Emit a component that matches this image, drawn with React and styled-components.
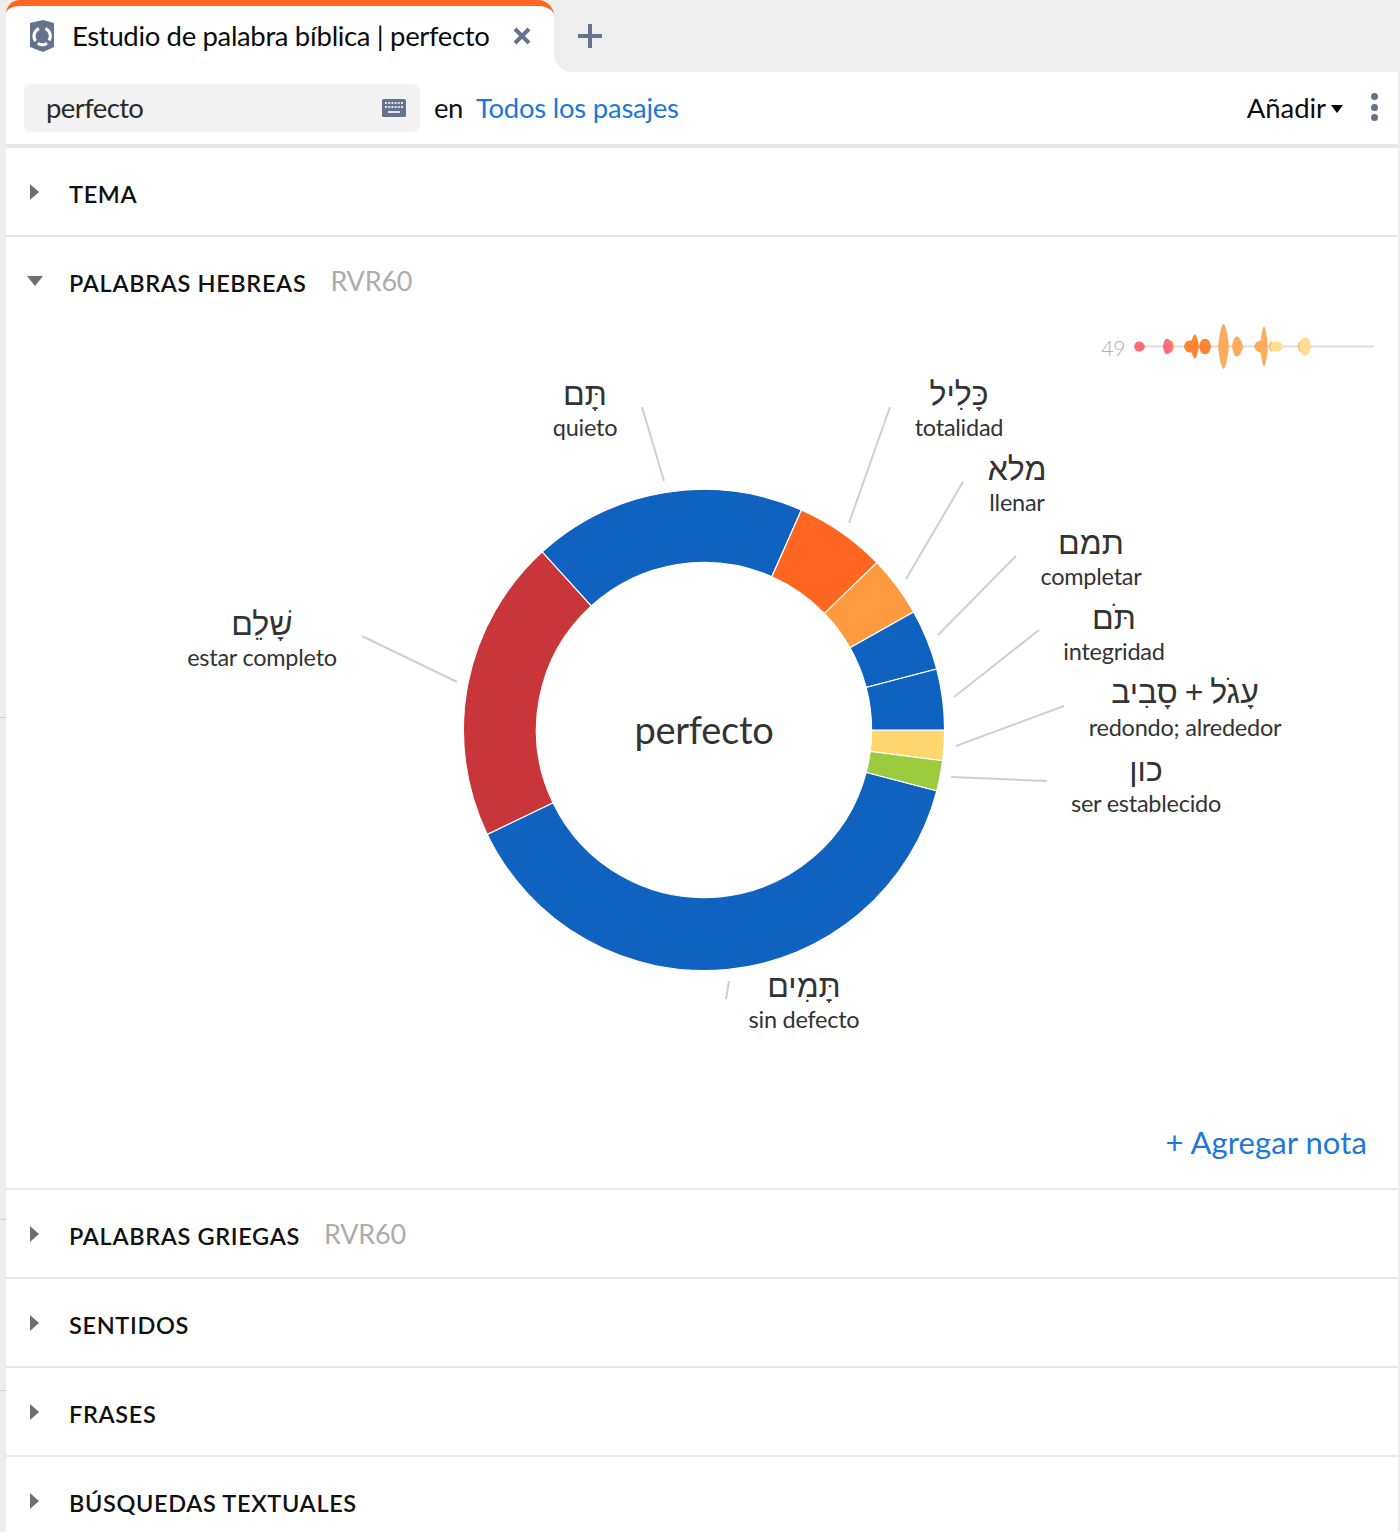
import React from "react";
import styled, { createGlobalStyle } from "styled-components";

const SANS = `Lato, "Noto Sans", "Liberation Sans", sans-serif`;
const HEB = `"Liberation Sans", "DejaVu Sans", sans-serif`;
const SLATE = "#66738f";
const LINK = "#2176d9";
const RULE = "#e8e8e8";

const Global = createGlobalStyle`
  html, body { margin: 0; padding: 0; height: 1532px; overflow: hidden; }
  body { font-family: ${SANS}; background: #eeeeee; }
  * { box-sizing: border-box; }
`;

const Page = styled.div`
  height: 1532px;
  overflow: hidden;
  padding: 0 2px 0 6px;
  background:
    linear-gradient(#cfcfcf, #cfcfcf) 0 717px / 6px 1px no-repeat,
    linear-gradient(#cfcfcf, #cfcfcf) 0 1219px / 6px 1px no-repeat,
    linear-gradient(#cfcfcf, #cfcfcf) 0 1390px / 6px 1px no-repeat,
    #eeeeee;
`;

const TabStrip = styled.div`
  display: flex;
  height: 72px;
  margin-right: -2px;
  background: linear-gradient(#eeeeee 50%, #ffffff 50%);
`;

const Tab = styled.div`
  width: 548px;
  flex: none;
  display: flex;
  align-items: center;
  background: #fff;
  border-top: 6px solid #ff6622;
  border-radius: 14px 16px 0 0;
  padding: 0 0 6px 24px;
`;

const TabTitle = styled.span`
  font-size: 27.5px;
  color: #0c0c0c;
  margin-left: 18px;
  padding-bottom: 2px;
  letter-spacing: -0.35px;
  white-space: nowrap;
  flex: 1;
`;

const IconBtn = styled.button`
  border: 0;
  background: none;
  padding: 0;
  display: flex;
  flex: none;
  margin: ${(p) => p.$m || 0};
`;

const TabRest = styled.div`
  flex: 1;
  display: flex;
  align-items: center;
  padding: 0 0 0 24px;
  background: #eeeeee;
  border-bottom-left-radius: 18px;
`;

const Panel = styled.div`
  background: #fff;
  height: 1460px;
`;

const Toolbar = styled.div`
  height: 76px;
  display: flex;
  align-items: center;
  padding: 0 20px 0 18px;
  background: #fff;
  border-bottom: 4px solid ${RULE};
  border-top-right-radius: 10px;
`;

const SearchBox = styled.div`
  width: 396px;
  height: 48px;
  display: flex;
  align-items: center;
  justify-content: space-between;
  background: #f3f3f3;
  border-radius: 6px;
  padding: 0 14px 0 22px;
`;

const SearchText = styled.span`
  font-size: 27.5px;
  letter-spacing: -0.6px;
  color: #2b2b2b;
  padding-bottom: 2px;
`;

const InWord = styled.span`
  font-size: 27.5px;
  letter-spacing: -0.5px;
  color: #111;
  margin-left: 14px;
  padding-bottom: 2px;
`;

const ScopeLink = styled.a`
  font-size: 27.5px;
  letter-spacing: -0.25px;
  color: ${LINK};
  margin-left: 13px;
  padding-bottom: 2px;
`;

const AddMenu = styled.div`
  margin-left: auto;
  display: flex;
  align-items: center;
`;

const AddLabel = styled.span`
  font-size: 27.5px;
  letter-spacing: -0.05px;
  color: #0c0c0c;
  padding-bottom: 2px;
`;

const Caret = styled.span`
  width: 0;
  height: 0;
  margin: 2px 0 0 5px;
  border-left: 6.5px solid transparent;
  border-right: 6.5px solid transparent;
  border-top: 8px solid #000;
`;

const Kebab = styled.div`
  display: flex;
  flex-direction: column;
  gap: 3.5px;
  margin: 0 0 2px 28px;
  span {
    width: 7px;
    height: 7px;
    border-radius: 50%;
    background: ${SLATE};
  }
`;

const Row = styled.div`
  height: ${(p) => (p.$open ? "87px" : "89px")};
  display: flex;
  align-items: center;
  padding-left: 20px;
  border-bottom: ${(p) => (p.$open ? "0" : `2px solid ${RULE}`)};
`;

const ChevronSlot = styled.span`
  width: 17px;
  margin-right: 26px;
  display: flex;
  justify-content: center;
  flex: none;
`;

const Chevron = styled.span`
  width: 0;
  height: 0;
  ${(p) =>
    p.$open
      ? `border-left: 8.5px solid transparent; border-right: 8.5px solid transparent; border-top: 10px solid #6e6e6e;`
      : `border-top: 8.5px solid transparent; border-bottom: 8.5px solid transparent; border-left: 9.5px solid #6e6e6e;`}
`;

const RowTitle = styled.span`
  font-size: 23.5px;
  font-weight: 600;
  letter-spacing: 0.65px;
  color: #111;
  padding-top: 4px;
`;

const RowTag = styled.span`
  font-size: 27px;
  letter-spacing: -0.2px;
  color: #adadad;
  margin-left: 24px;
`;

const Canvas = styled.div`
  position: relative;
  height: 786px;
  svg {
    display: block;
  }
`;

const Label = styled.div`
  position: absolute;
  transform: translateX(-50%);
  text-align: center;
  white-space: nowrap;
  color: #333;
`;

const Hebrew = styled.div`
  font-family: ${HEB};
  font-size: 32px;
  line-height: 34px;
  word-spacing: -2px;
`;

const Gloss = styled.div`
  font-size: 23.5px;
  letter-spacing: -0.25px;
  line-height: 32px;
  margin-top: ${(p) => p.$gap || 0}px;
`;

const CenterWord = styled.div`
  position: absolute;
  left: 698px;
  top: 380px;
  transform: translateX(-50%);
  font-size: 38px;
  letter-spacing: -0.25px;
  line-height: 50px;
  color: #333;
`;

const Count = styled.div`
  position: absolute;
  left: 1095px;
  top: 9px;
  font-size: 22px;
  font-weight: 300;
  letter-spacing: -0.8px;
  line-height: 30px;
  color: #b0b0b0;
`;

const NoteBar = styled.div`
  height: 80px;
  display: flex;
  justify-content: flex-end;
  padding: 12px 31px 0 0;
  border-bottom: 2px solid ${RULE};
`;

const NoteLink = styled.a`
  font-size: 31px;
  letter-spacing: 0.1px;
  line-height: 40px;
  color: ${LINK};
`;

const C = [704, 730];
const R = 240.6;
const r = 167.6;
const UNIT = 360 / 49;
const SEGMENTS = [
  [1, "#ffd56e"],
  [1, "#9ccb3e"],
  [19, "#1062c1"],
  [10, "#c93639"],
  [9, "#1062c1"],
  [3, "#ff6622"],
  [2, "#ff9a40"],
  [2, "#1062c1"],
  [2, "#1062c1"],
];

const pt = (rad, deg) => {
  const a = (deg * Math.PI) / 180;
  return `${(C[0] + rad * Math.cos(a)).toFixed(2)} ${(C[1] + rad * Math.sin(a)).toFixed(2)}`;
};

const arc = (from, to) => {
  const large = to - from > 180 ? 1 : 0;
  return `M${pt(R, from)}A${R} ${R} 0 ${large} 1 ${pt(R, to)}L${pt(r, to)}A${r} ${r} 0 ${large} 0 ${pt(r, from)}Z`;
};

const LEADERS = [
  [642, 407, 664, 481],
  [890, 407, 849, 523],
  [963, 482, 906, 579],
  [1016, 556, 938, 635],
  [1039, 630, 954, 697],
  [1064, 706, 956, 746],
  [1047, 781, 951, 777],
  [729, 981, 726, 999],
  [362, 636, 457, 682],
];

const LABELS = [
  ["תָּם", "quieto", 585, 377],
  ["כָּלִיל", "totalidad", 959, 377],
  ["מלא", "llenar", 1017, 452],
  ["תמם", "completar", 1091, 526],
  ["תֹּם", "integridad", 1114, 601],
  ["עָגֹל + סָבִיב", "redondo; alrededor", 1185, 675, 2],
  ["כון", "ser establecido", 1146, 753],
  ["תָּמִים", "sin defecto", 804, 969],
  ["שָׁלֵם", "estar completo", 262, 607],
];

const blob = (a, b, peak, h, f, y = 346.5) => {
  const l = peak - a;
  const g = b - peak;
  return (
    `M${a} ${y}` +
    `C${a + l * 0.25} ${y - h * f} ${peak - l * 0.35} ${y - h} ${peak} ${y - h}` +
    `C${peak + g * 0.35} ${y - h} ${b - g * 0.25} ${y - h * f} ${b} ${y}` +
    `C${b - g * 0.25} ${y + h * f} ${peak + g * 0.35} ${y + h} ${peak} ${y + h}` +
    `C${peak - l * 0.35} ${y + h} ${a + l * 0.25} ${y + h * f} ${a} ${y}Z`
  );
};

const BLOBS = [
  [1134, 1145, 1139, 5, 0.9, "#ff6b75"],
  [1168, 1174, 1170, 6, 0.9, "#ff9550"],
  [1163, 1172, 1167, 7.5, 0.9, "#ff6b80"],
  [1184, 1197, 1190, 6, 0.95, "#ff8536"],
  [1190, 1199, 1195, 12, 0.5, "#ff8536"],
  [1199, 1211, 1205, 7.5, 1, "#ff8536"],
  [1218, 1229, 1223.5, 22.5, 0.55, "#ffab5c"],
  [1232, 1243, 1236.5, 10, 0.7, "#ffab5c"],
  [1254, 1264, 1261, 6, 0.8, "#ffab5c"],
  [1260, 1268, 1264, 20, 0.5, "#ffab5c"],
  [1269, 1273, 1272, 5, 0.9, "#ffab5c"],
  [1270, 1283, 1275, 5, 1, "#ffde90"],
  [1298, 1304, 1301, 5.5, 0.9, "#ffab5c"],
  [1299, 1311, 1305, 9, 0.85, "#ffde90"],
];

const TabLogo = () => (
  <svg width="24" height="32" viewBox="0 0 24 32">
    <path d="M0 3 13 0 24 3V27L13 32 0 27Z" fill={SLATE} />
    <path d="M9 8.7A8 8 0 0 0 5.6 21M19 20.5A8 8 0 0 0 15.4 8.7M7.8 23.2A8 8 0 0 0 17 23.2" fill="none" stroke="#fff" strokeWidth="3" />
  </svg>
);

const CloseIcon = () => (
  <svg width="18" height="18" viewBox="0 0 18 18">
    <path d="M2 2 16 16M16 2 2 16" stroke={SLATE} strokeWidth="4" />
  </svg>
);

const PlusIcon = () => (
  <svg width="24" height="24" viewBox="0 0 24 24">
    <path d="M12 1V23M1 12H23" stroke={SLATE} strokeWidth="4" strokeLinecap="round" />
  </svg>
);

const KeyboardIcon = () => (
  <svg width="24" height="18" viewBox="0 0 24 18">
    <rect width="24" height="18" rx="1.5" fill={SLATE} />
    <path d="M3 4H21M3 8H21" stroke="#dfe3ea" strokeWidth="2" strokeDasharray="2 1.2" />
    <path d="M6 13H18" stroke="#dfe3ea" strokeWidth="2" />
  </svg>
);

const SectionRow = ({ title, tag, open }) => (
  <Row $open={open}>
    <ChevronSlot>
      <Chevron $open={open} />
    </ChevronSlot>
    <RowTitle>{title}</RowTitle>
    {tag && <RowTag>{tag}</RowTag>}
  </Row>
);

export default function App() {
  let acc = 0;
  return (
    <Page>
      <Global />
      <TabStrip>
        <Tab>
          <TabLogo />
          <TabTitle>Estudio de palabra bíblica | perfecto</TabTitle>
          <IconBtn $m="0 23px 0 0">
            <CloseIcon />
          </IconBtn>
        </Tab>
        <TabRest>
          <IconBtn>
            <PlusIcon />
          </IconBtn>
        </TabRest>
      </TabStrip>
      <Panel>
        <Toolbar>
          <SearchBox>
            <SearchText>perfecto</SearchText>
            <KeyboardIcon />
          </SearchBox>
          <InWord>en</InWord>
          <ScopeLink>Todos los pasajes</ScopeLink>
          <AddMenu>
            <AddLabel>Añadir</AddLabel>
            <Caret />
            <Kebab>
              <span />
              <span />
              <span />
            </Kebab>
          </AddMenu>
        </Toolbar>
        <SectionRow title="TEMA" />
        <SectionRow title="PALABRAS HEBREAS" tag="RVR60" open />
        <Canvas>
          <svg width="1392" height="786" viewBox="6 324 1392 786">
            <path d="M1138 346.5H1374" stroke="#dddddd" strokeWidth="2" />
            {BLOBS.map(([a, b, p, h, f, c], i) => (
              <path key={i} d={blob(a, b, p, h, f)} fill={c} />
            ))}
            {LEADERS.map(([x1, y1, x2, y2], i) => (
              <line key={i} x1={x1} y1={y1} x2={x2} y2={y2} stroke="#cfcfcf" strokeWidth="2" />
            ))}
            {SEGMENTS.map(([n, color], i) => {
              const from = acc * UNIT;
              acc += n;
              return <path key={i} d={arc(from, acc * UNIT)} fill={color} stroke="#fff" strokeWidth="1.2" />;
            })}
          </svg>
          <Count>49</Count>
          <CenterWord>perfecto</CenterWord>
          {LABELS.map(([he, gloss, x, y, gap]) => (
            <Label key={gloss} style={{ left: x - 6, top: y - 324 }}>
              <Hebrew lang="he" dir="rtl">{he}</Hebrew>
              <Gloss $gap={gap}>{gloss}</Gloss>
            </Label>
          ))}
        </Canvas>
        <NoteBar>
          <NoteLink>+ Agregar nota</NoteLink>
        </NoteBar>
        <SectionRow title="PALABRAS GRIEGAS" tag="RVR60" />
        <SectionRow title="SENTIDOS" />
        <SectionRow title="FRASES" />
        <SectionRow title="BÚSQUEDAS TEXTUALES" />
      </Panel>
    </Page>
  );
}
